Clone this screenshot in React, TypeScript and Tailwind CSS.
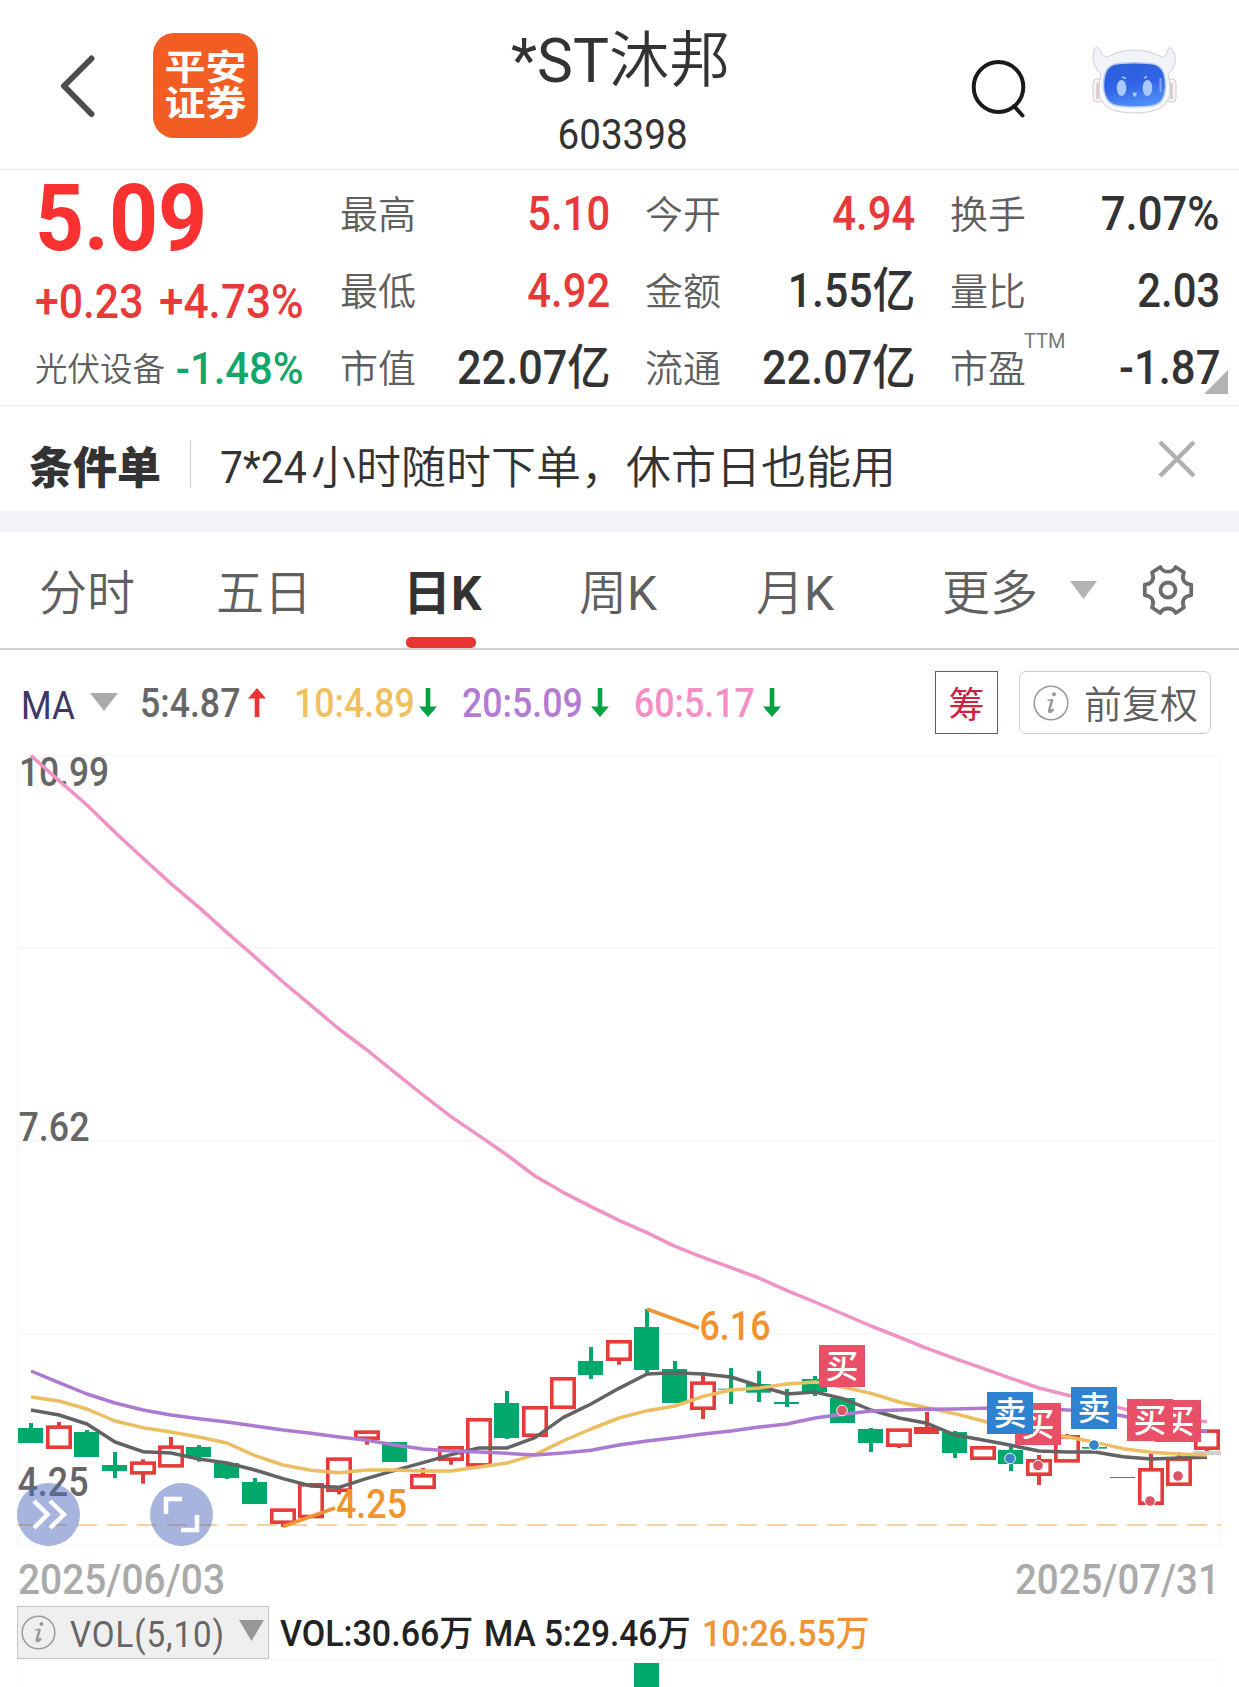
import type { ReactNode } from 'react';

interface Quote {
  label: string;
  value: string;
  squeeze: string;
  up?: boolean;
  note?: string;
}

type Candle = [kind: 'up' | 'down' | 'solid', high: number, top: number, bottom: number, low: number];

const QUOTES: Quote[][] = [
  [
    { label: '最高', value: '5.10', squeeze: 'scale-x-[0.87]', up: true },
    { label: '最低', value: '4.92', squeeze: 'scale-x-[0.87]', up: true },
    { label: '市值', value: '22.07亿', squeeze: 'scale-x-[0.9]' },
  ],
  [
    { label: '今开', value: '4.94', squeeze: 'scale-x-[0.87]', up: true },
    { label: '金额', value: '1.55亿', squeeze: 'scale-x-[0.89]' },
    { label: '流通', value: '22.07亿', squeeze: 'scale-x-[0.9]' },
  ],
  [
    { label: '换手', value: '7.07%', squeeze: 'scale-x-[0.91]' },
    { label: '量比', value: '2.03', squeeze: 'scale-x-[0.87]' },
    { label: '市盈', value: '-1.87', squeeze: 'scale-x-[0.91]', note: 'TTM' },
  ],
];

const TABS = [
  { name: '分时', width: 'w-[177px]' },
  { name: '五日', width: 'w-[190px]' },
  { name: '日', unit: 'K', width: 'w-[173px]', active: true },
  { name: '周', unit: 'K', width: 'w-[177px]' },
  { name: '月', unit: 'K', width: 'w-[186px]' },
  { name: '更多', width: 'w-[128px]' },
];

const AVERAGES = [
  { text: '5:4.87', box: 'w-[107px]', gap: 'w-[47px]', color: 'text-[#666666]', up: true },
  { text: '10:4.89', box: 'w-[124px]', gap: 'w-[44px]', color: 'text-[#f2bf5d]', up: false },
  { text: '20:5.09', box: 'w-[128px]', gap: 'w-[44px]', color: 'text-[#b37bd6]', up: false },
  { text: '60:5.17', box: 'w-[128px]', gap: 'w-[44px]', color: 'text-[#f48fc6]', up: false },
];

// Chart values are in thirds of a pixel, measured down from BASE.
const BASE = 1290;
const y = (v: number) => BASE + v / 3;
const x = (i: number) => 31 + i * 28;

const CANDLES: Candle[] = [
  ['down', 399, 414, 459, 459],
  ['up', 396, 406, 477, 477],
  ['down', 420, 426, 501, 501],
  ['down', 486, 525, 543, 564],
  ['up', 508, 514, 554, 581],
  ['up', 441, 466, 533, 533],
  ['down', 465, 471, 501, 515],
  ['down', 519, 519, 564, 567],
  ['down', 564, 576, 642, 642],
  ['up', 655, 655, 702, 711],
  ['up', 579, 579, 685, 685],
  ['up', 502, 502, 606, 613],
  ['up', 421, 421, 450, 464],
  ['down', 456, 456, 516, 516],
  ['up', 534, 552, 597, 597],
  ['up', 468, 468, 513, 524],
  ['up', 384, 384, 530, 530],
  ['down', 303, 339, 444, 447],
  ['up', 348, 348, 441, 441],
  ['up', 261, 261, 357, 357],
  ['down', 171, 213, 255, 267],
  ['up', 150, 150, 213, 224],
  ['down', 57, 111, 240, 248],
  ['down', 213, 237, 339, 339],
  ['up', 247, 274, 360, 387],
  ['down', 234, 296, 299, 342],
  ['down', 243, 282, 308, 336],
  ['down', 297, 336, 342, 351],
  ['down', 258, 267, 306, 318],
  ['down', 324, 324, 399, 399],
  ['down', 414, 417, 459, 486],
  ['up', 415, 415, 471, 474],
  ['solid', 366, 411, 432, 432],
  ['down', 423, 426, 489, 504],
  ['up', 468, 468, 510, 510],
  ['down', 470, 480, 522, 543],
  ['up', 495, 507, 558, 585],
  ['up', 432, 435, 518, 518],
  ['down', 471, 471, 476, 476],
  ['down', 561, 561, 564, 564],
  ['up', 487, 534, 645, 645],
  ['up', 487, 502, 588, 588],
  ['up', 418, 418, 480, 483],
];

const MA5 = [
  360, 375, 402, 456, 485, 489, 507, 519, 540, 566, 588, 592, 565, 541, 518, 494, 474, 474, 443, 383, 342, 295,
  252, 248, 252, 261, 288, 312, 306, 326, 360, 384, 400, 435, 450, 466, 483, 486, 486, 500, 507, 504, 502,
];
const MA10 = [
  321, 333, 357, 393, 413, 426, 441, 459, 497, 525, 541, 548, 540, 540, 543, 543, 531, 519, 494, 453, 417, 384,
  362, 348, 319, 300, 294, 282, 276, 291, 310, 336, 353, 371, 393, 415, 430, 440, 457, 476, 487, 492, 495,
];
const MA20 = [
  243, 278, 312, 339, 360, 375, 386, 396, 408, 420, 430, 441, 451, 465, 477, 483, 486, 490, 495, 489, 481, 465,
  453, 443, 432, 423, 411, 402, 384, 373, 363, 360, 358, 357, 355, 353, 355, 360, 364, 378, 395, 412, 425,
];
const MA60 = [
  -1603, -1528, -1455, -1373, -1295, -1219, -1148, -1072, -999, -924, -854, -783, -720, -652, -585, -520, -463,
  -405, -342, -293, -250, -209, -172, -131, -98, -67, -36, 2, 36, 72, 108, 141, 175, 206, 235, 265, 294, 315, 332,
  356, 373, 386, 395,
];

const TRADES = [
  { side: '买', left: 819, top: 1345 },
  { side: '买', left: 1015, top: 1403 },
  { side: '卖', left: 987, top: 1392 },
  { side: '卖', left: 1071, top: 1387 },
  { side: '买', left: 1155, top: 1400 },
  { side: '买', left: 1127, top: 1399 },
];

const MARKS = [
  { cx: 842, cy: 1410.5, buy: true },
  { cx: 1010, cy: 1458.5, buy: false },
  { cx: 1038, cy: 1465.5, buy: true },
  { cx: 1094, cy: 1445, buy: false },
  { cx: 1150, cy: 1501, buy: true },
  { cx: 1178, cy: 1476, buy: true },
];

const toPoints = (values: number[]) => values.map((v, i) => `${x(i)},${y(v)}`).join(' ');

function Triangle({ className }: { className: string }) {
  return (
    <svg className={className} viewBox="0 0 28 20" preserveAspectRatio="none" fill="currentColor">
      <path d="M0 0h28L14 20z" />
    </svg>
  );
}

function InfoIcon({ className }: { className: string }) {
  return (
    <svg className={className} viewBox="0 0 36 36" fill="none">
      <circle cx="18" cy="18" r="16.8" stroke="currentColor" strokeWidth="1.5" />
      <circle cx="21" cy="9.200" r="2" fill="currentColor" />
      <path d="M14.500 15.500l5-1" stroke="currentColor" strokeWidth="1.300" />
      <path d="M19.300 14.500l-3 10.500q-.5 2.500 1.500 1.600l2.800-2.400" stroke="currentColor" strokeWidth="2.600" />
    </svg>
  );
}

function Robot() {
  return (
    <svg className="h-[72px] w-[88px]" viewBox="0 0 88 72">
      <defs>
        <linearGradient id="face" x1="0" y1="0" x2="0.3" y2="1">
          <stop offset="0" stopColor="#2b5fd6" />
          <stop offset="0.6" stopColor="#3264e8" />
          <stop offset="1" stopColor="#4c8cf5" />
        </linearGradient>
        <linearGradient id="shell" x1="0" y1="0" x2="0" y2="1">
          <stop offset="0" stopColor="#eff1f5" />
          <stop offset="1" stopColor="#fbfcfd" />
        </linearGradient>
      </defs>
      <rect x="2" y="33" width="12" height="23" rx="4" fill="#f6f3f3" stroke="#cdcdd0" />
      <rect x="73" y="33" width="12" height="23" rx="4" fill="#f6f3f3" stroke="#cdcdd0" />
      <path d="M6.500 37v16M80.500 37v16" stroke="#dcbcb8" strokeWidth="2" />
      <path
        d="M4 2Q0 10 4 20Q6 25 10 28Q8 34 8 44Q8 67 43.500 67Q79 67 79 44Q79 34 77 28Q81 25 83 20Q87 10 80 1.500Q77 1 76 6Q75 11 71 11Q58 4 43.500 4Q29 4 16 11Q12 11 10 6Q8 0 4 2z"
        fill="url(#shell)"
        stroke="#cfd1d6"
      />
      <path
        d="M14 28Q17 18 28 17.500Q43 16 59 17.500Q70 18 73 28Q76 40 73 50Q70 59 60 60Q43 62 28 60Q17 59 14 49Q11 40 14 28z"
        fill="url(#face)"
        stroke="#b9cbf3"
        strokeWidth="1.500"
      />
      <ellipse cx="30.500" cy="42" rx="4.800" ry="8" fill="#a9c9fa" />
      <ellipse cx="56.500" cy="42" rx="4.800" ry="8" fill="#a9c9fa" />
      <path d="M31 31l4 1.500M53 32l3-1.500" stroke="#a9c9fa" strokeWidth="1.800" />
      <path d="M41.500 46.500h4.500l-1 4h-2.500z" fill="#a9c9fa" />
      <path d="M69.500 32v14" stroke="#86a9f3" strokeWidth="2" />
    </svg>
  );
}

function Header() {
  return (
    <header className="flex h-[170px] border-b border-[#e6e6e6]">
      <div className="flex w-[400px] items-start pl-[60px] pt-[33px]">
        <svg className="mt-[21px] h-[64px] w-[36px]" viewBox="0 0 36 64" fill="none" stroke="#4d4d4d" strokeWidth="6" strokeLinecap="round" strokeLinejoin="round">
          <path d="M31.500 4.500L4 32l27.500 28" />
        </svg>
        <div className="ml-[57px] flex h-[105px] w-[105px] flex-col items-center justify-center rounded-[21px] bg-[#f15d23] text-[41px] font-bold leading-[36px] text-white">
          <span className="scale-y-[0.86]">平安</span>
          <span className="scale-y-[0.86]">证券</span>
        </div>
      </div>
      <div className="flex w-[440px] flex-col items-center pt-[29px] text-[#333333]">
        <h1 className="flex scale-x-[0.99] whitespace-nowrap text-[61px] font-[350] leading-[64px]">
          <span className="font-normal">*ST</span>
          沐邦
        </h1>
        <div className="mt-[20px] scale-x-[0.92] pl-[5px] text-[42px] font-normal leading-[44px]">603398</div>
      </div>
      <div className="flex flex-1 items-start pl-[131px]">
        <svg className="mt-[59px] h-[60px] w-[56px]" viewBox="0 0 56 60" fill="none" stroke="#1a1a1a" strokeWidth="4">
          <ellipse cx="27.500" cy="28" rx="24.800" ry="25" />
          <path d="M43 47l8.500 9.500" strokeLinecap="round" />
        </svg>
        <div className="ml-[64px] mt-[46px]">
          <Robot />
        </div>
      </div>
    </header>
  );
}

function QuoteRow({ label, value, squeeze, up, note }: Quote) {
  return (
    <div className="relative flex h-[77px] items-center justify-between">
      <span className="pt-[4px] text-[38px] font-[350] text-[#5f5f5f]">{label}</span>
      {note && <sup className="absolute left-[74px] top-[2px] origin-left scale-x-[0.95] text-[21px] font-normal leading-[20px] text-[#777777]">{note}</sup>}
      <span className={`-mr-[2px] origin-right whitespace-nowrap text-[48px] font-medium ${squeeze} ${up ? 'text-[#e73939]' : 'text-[#333333]'}`}>
        {value}
      </span>
    </div>
  );
}

function Summary() {
  return (
    <section className="relative flex h-[236px] border-b border-[#e8e8e8] pl-[35px] pt-[5px]">
      <div className="w-[305px] whitespace-nowrap">
        <div className="h-[87px] origin-left scale-x-[0.92] text-[93px] font-bold leading-[87px] text-[#f93131]">5.09</div>
        <div className="flex h-[79px] items-center text-[48px] font-medium text-[#e83a3a]">
          <span className="w-[124px] origin-left scale-x-[0.89]">+0.23</span>
          <span className="origin-left scale-x-[0.92]">+4.73%</span>
        </div>
        <div className="flex h-[55px] w-[268px] items-center justify-between">
          <span className="pt-[4px] text-[32.500px] font-[350] text-[#5f5f5f]">光伏设备</span>
          <span className="-mr-[1px] origin-right scale-x-[0.95] text-[44px] font-medium text-[#12a66b]">-1.48%</span>
        </div>
      </div>
      <div className="flex gap-[37px]">
        {QUOTES.map((column) => (
          <div key={column[0].label} className="w-[268px]">
            {column.map((quote) => (
              <QuoteRow key={quote.label} {...quote} />
            ))}
          </div>
        ))}
      </div>
      <svg className="absolute bottom-[11px] right-[11px] h-[24px] w-[24px]" viewBox="0 0 24 24" fill="#b3b3b3">
        <path d="M24 0v24H0z" />
      </svg>
    </section>
  );
}

function Notice() {
  return (
    <section className="flex h-[126px] items-start border-b-[21px] border-[#f3f4f9] text-[#333333]">
      <strong className="ml-[29px] mt-[37px] w-[161px] text-[44px] font-black leading-[52px]">条件单</strong>
      <div className="mt-[35px] h-[46px] w-px bg-[#cccccc]" />
      <p className="ml-[29px] mt-[37px] flex flex-1 whitespace-nowrap text-[45px] font-[350] leading-[52px]">
        <span className="-mt-px w-[91px] origin-left scale-x-[0.91] font-normal">7*24</span>
        <span>小时随时下单，休市日也能用</span>
      </p>
      <svg className="mr-[42px] mt-[34px] h-[38px] w-[40px]" viewBox="0 0 40 38" fill="none" stroke="#b0b0b0" strokeWidth="4.500">
        <path d="M3 2l34 34M37 2L3 36" />
      </svg>
    </section>
  );
}

function Tabs() {
  return (
    <nav className="flex h-[118px] border-b-2 border-[#d2d2d2] pl-[39px] text-[48px] font-[350] text-[#606060]">
      {TABS.map(({ name, unit, width, active }) => (
        <div key={name} className={`relative shrink-0 pt-[32px] leading-[60px] ${width} ${active ? 'font-bold text-[#333333]' : ''}`}>
          <span className={active ? '-ml-[3px]' : ''}>
            {name}
            {unit && <span className={active ? 'font-bold' : 'font-normal'}>{unit}</span>}
          </span>
          {active && <div className="absolute bottom-0 left-0 h-[11px] w-[70px] rounded-[5px] bg-[#ea3535]" />}
        </div>
      ))}
      <Triangle className="mt-[49px] h-[18px] w-[27px] text-[#b3b3b3]" />
      <svg className="ml-[45px] mt-[32px] h-[52px] w-[52px]" viewBox="0 0 52 52" fill="none" stroke="#6c6c6c" strokeWidth="3.800" strokeLinejoin="round">
        <path d="M10 8.500L18.300 3Q20.500 7.700 26 7.700T33.700 3L42 8.500C39.500 14 41 20 49.200 20.700V31.300C41 32 39.500 38 42 43.500L33.700 49Q31.500 44.500 26 44.500T18.300 49L10 43.500C12.500 38 11 32 2.800 31.300V20.700C11 20 12.500 14 10 8.500z" />
        <circle cx="26" cy="26" r="7.500" />
      </svg>
    </nav>
  );
}

function Indicators() {
  return (
    <div className="flex h-[90px] items-start">
      <span className="ml-[21px] mt-[32px] w-[69px] origin-left scale-x-[0.9] text-[39px] font-normal leading-[48px] text-[#3c3866]">MA</span>
      <Triangle className="mt-[43px] h-[18px] w-[28px] text-[#ababab]" />
      <div className="ml-[22px] mt-[29px] flex">
        {AVERAGES.map(({ text, box, gap, color, up }) => (
          <div key={text} className="flex">
            <span className={`${box} ${color} origin-left scale-x-[0.87] whitespace-nowrap text-[41px] font-medium leading-[48px]`}>{text}</span>
            <div className={gap}>
              <svg className={`mt-[9px] h-[29px] w-[20px] ${up ? 'text-[#ea3535]' : 'rotate-180 text-[#06a244]'}`} viewBox="0 0 20 29" fill="currentColor">
                <path d="M10 0l9 10.500h-6.700V29H7.700V10.500H1z" />
              </svg>
            </div>
          </div>
        ))}
      </div>
      <div className="ml-auto mr-[28px] mt-[21px] flex gap-[21px]">
        <button className="h-[63px] w-[63px] border border-[#a04256] pt-[6px] text-[36px] font-normal text-[#c9233f]">筹</button>
        <button className="flex h-[63px] w-[192px] items-center rounded-[7px] border border-[#cccccc] pl-[13px] text-[38px] font-[350] text-[#5f5f5f]">
          <InfoIcon className="mr-[15px] h-[36px] w-[36px] text-[#999999]" />
          <span className="pt-[6px]">前复权</span>
        </button>
      </div>
    </div>
  );
}

function CandleShape({ index, candle }: { index: number; candle: Candle }) {
  const [kind, high, top, bottom, low] = candle;
  const cx = x(index);
  const color = kind === 'down' ? '#00a96b' : '#e53c3a';

  return (
    <g stroke={color} fill={kind === 'up' ? '#ffffff' : color}>
      {high < top && <path d={`M${cx} ${y(high)}V${y(top) + 1}`} strokeWidth="4" />}
      {low > bottom && <path d={`M${cx} ${y(bottom) - 1}V${y(low)}`} strokeWidth="4" />}
      {kind === 'up' ? (
        <rect x={cx - 11.2} y={y(top) + 1.8} width="22.400" height={(bottom - top) / 3 - 3.6} strokeWidth="3.600" />
      ) : (
        <rect x={cx - 13} y={y(top)} width="25" height={(bottom - top) / 3} stroke="none" />
      )}
    </g>
  );
}

function Label({ left, base, color, width, children }: { left: number; base: number; color: string; width: number; children: ReactNode }) {
  return (
    <text x={left} y={base} fill={color} textLength={width} lengthAdjust="spacingAndGlyphs" className="text-[40px] font-medium">
      {children}
    </text>
  );
}

function Chart() {
  return (
    <svg className="block h-[806px] w-full" viewBox="0 740 1239 806">
      <g fill="none" stroke="#f7f7f8" strokeWidth="1.500">
        <rect x="17.500" y="755.500" width="1203" height="790" />
        <path d="M17 948H1220M17 1140.700H1220M17 1333.700H1220" />
      </g>
      <Label left={19} base={786} width={90} color="#666666">10.99</Label>
      <Label left={18.5} base={1140.5} width={71} color="#666666">7.62</Label>
      <Label left={17.5} base={1495.5} width={71} color="#666666">4.25</Label>

      <path d="M17 1525H1221" stroke="#f6d2a0" strokeWidth="2" strokeDasharray="20 10" />
      {CANDLES.map((candle, i) => (
        <CandleShape key={i} index={i} candle={candle} />
      ))}
      <path d="M1193 1453H1221" stroke="#d0d0d0" strokeWidth="4" />

      <g fill="none" strokeWidth="3.500" strokeLinejoin="round">
        <polyline points={toPoints(MA5)} stroke="#636363" />
        <polyline points={toPoints(MA10)} stroke="#edbd61" />
        <polyline points={toPoints(MA20)} stroke="#ac7ad0" />
        <polyline points={toPoints(MA60)} stroke="#ef93c5" />
        <path d="M647 1309l52 19M283 1526.500l52-18.500" stroke="#ee9436" />
      </g>
      <Label left={699.5} base={1340} width={71} color="#f0932e">6.16</Label>
      <Label left={336} base={1518} width={71} color="#f0932e">4.25</Label>

      {TRADES.map(({ side, left, top }) => (
        <g key={left}>
          <rect x={left} y={top} width="46" height="42" fill={side === '买' ? '#e94f66' : '#2f82d0'} />
          <text x={left + 23} y={top + 33} textAnchor="middle" fill="#ffffff" className="text-[33px] font-medium">
            {side}
          </text>
        </g>
      ))}
      {MARKS.map(({ cx, cy, buy }) => (
        <circle key={cx} cx={cx} cy={cy} r="5.300" fill={buy ? '#dd5468' : '#3a84cb'} stroke="#ffffff" />
      ))}

      <g fill="#5069be" fillOpacity="0.5">
        <circle cx="48.500" cy="1514.500" r="31.500" />
        <circle cx="181.500" cy="1514.500" r="31.500" />
      </g>
      <g fill="none" stroke="#ffffff" strokeWidth="4.500">
        <path d="M34 1501l13.500 13.500L34 1528M50 1501l14 13.500-14 13.500" />
        <path d="M182 1499h-16v15M197 1515v15h-16" />
      </g>
    </svg>
  );
}

function Volume() {
  return (
    <section className="relative flex-1">
      <div className="flex h-[60px] items-center justify-between pl-[18px] pr-[19px] pt-[6px] text-[42px] font-medium text-[#aaaaaa]">
        <span className="origin-left scale-x-[0.925]">2025/06/03</span>
        <span className="origin-right scale-x-[0.915]">2025/07/31</span>
      </div>
      <div className="flex h-[53px] items-center whitespace-nowrap text-[36px] font-medium text-[#222222]">
        <button className="ml-[17px] flex h-[53px] w-[252px] items-center border border-[#c4c4c4] bg-[#efefef] pl-[3px] text-[#666666]">
          <InfoIcon className="h-[35px] w-[35px] text-[#999999]" />
          <span className="ml-[14px] w-[169px] origin-left scale-x-[0.92] pt-[4px] text-left font-normal tracking-[1px]">VOL(5,10)</span>
          <Triangle className="mb-[5px] h-[21px] w-[25px] text-[#979797]" />
        </button>
        <span className="ml-[11px] w-[204px] origin-left scale-x-[0.945] pt-[3px]">VOL:30.66万</span>
        <span className="w-[218px] origin-left scale-x-[0.93] pt-[3px]">MA 5:29.46万</span>
        <span className="origin-left scale-x-[0.94] pt-[3px] text-[#ee9436]">10:26.55万</span>
      </div>
      <div className="mx-[17px] flex h-[28px] items-end border-x border-t border-[#f7f7f8]">
        <div className="ml-[616px] h-[24px] w-[25px] bg-[#00a96b]" />
      </div>
    </section>
  );
}

export default function App() {
  return (
    <main className="flex h-[1687px] w-[1239px] flex-col overflow-hidden bg-white font-[Roboto,'Noto_Sans_CJK_SC',sans-serif]">
      <Header />
      <Summary />
      <Notice />
      <Tabs />
      <Indicators />
      <Chart />
      <Volume />
    </main>
  );
}
